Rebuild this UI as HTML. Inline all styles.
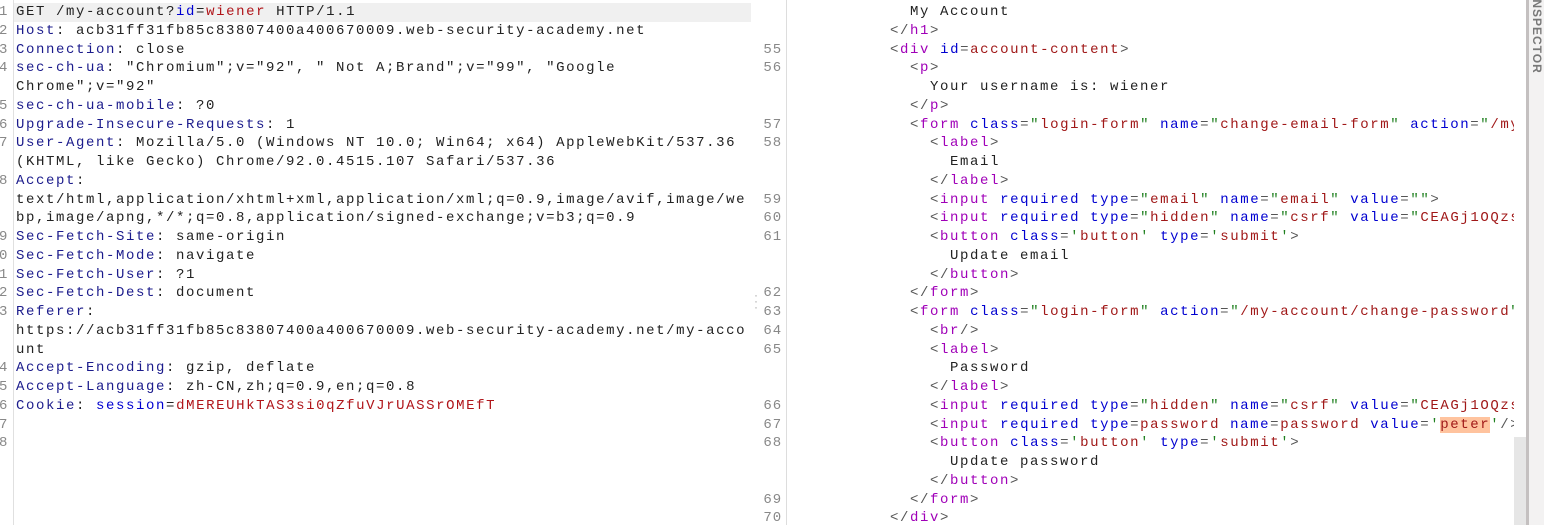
<!DOCTYPE html>
<html><head><meta charset="utf-8"><style>
html,body{margin:0;padding:0;background:#fff;width:1544px;height:525px;overflow:hidden;position:relative}
pre{margin:0;font-family:"Liberation Mono",monospace;font-size:14px;letter-spacing:1.6px;line-height:18.75px;position:absolute;white-space:pre;color:#222}
.h{color:#1c1c8c}.b{color:#0000d0}.r{color:#b0151a}.t{color:#a000b8}.g{color:#555}.q{color:#208020}.v{color:#a01818}
.num{color:#888}
</style></head><body>
<div style="position:absolute;left:13px;top:0;width:1px;height:525px;background:#e0e0e0"></div>
<div style="position:absolute;left:14px;top:3px;width:737px;height:19px;background:#f0f0f0"></div>
<pre class="num" style="left:-1px;top:3px;letter-spacing:0">1
2
3
4

5
6
7

8


9
0
1
2
3


4
5
6
7
8</pre>
<pre style="left:16px;top:3px;width:734px;overflow:hidden">GET /my-account?<span class="b">id</span>=<span class="r">wiener</span> HTTP/1.1
<span class="h">Host</span>: acb31ff31fb85c83807400a400670009.web-security-academy.net
<span class="h">Connection</span>: close
<span class="h">sec-ch-ua</span>: "Chromium";v="92", " Not A;Brand";v="99", "Google
Chrome";v="92"
<span class="h">sec-ch-ua-mobile</span>: ?0
<span class="h">Upgrade-Insecure-Requests</span>: 1
<span class="h">User-Agent</span>: Mozilla/5.0 (Windows NT 10.0; Win64; x64) AppleWebKit/537.36
(KHTML, like Gecko) Chrome/92.0.4515.107 Safari/537.36
<span class="h">Accept</span>:
text/html,application/xhtml+xml,application/xml;q=0.9,image/avif,image/we
bp,image/apng,*/*;q=0.8,application/signed-exchange;v=b3;q=0.9
<span class="h">Sec-Fetch-Site</span>: same-origin
<span class="h">Sec-Fetch-Mode</span>: navigate
<span class="h">Sec-Fetch-User</span>: ?1
<span class="h">Sec-Fetch-Dest</span>: document
<span class="h">Referer</span>:
https://acb31ff31fb85c83807400a400670009.web-security-academy.net/my-acco
unt
<span class="h">Accept-Encoding</span>: gzip, deflate
<span class="h">Accept-Language</span>: zh-CN,zh;q=0.9,en;q=0.8
<span class="h">Cookie</span>: <span class="b">session</span>=<span class="r">dMEREUHkTAS3si0qZfuVJrUASSrOMEfT</span></pre>
<div style="position:absolute;left:754px;top:292px;color:#aaa;font:12px 'Liberation Sans';line-height:6px">·<br>·<br>·</div>
<div style="position:absolute;left:786px;top:0;width:1px;height:525px;background:#ddd"></div>
<pre class="num" style="left:762px;top:3px;letter-spacing:0.9px;text-align:right;width:20px">&nbsp;
&nbsp;
55
56
&nbsp;
&nbsp;
57
58
&nbsp;
&nbsp;
59
60
61
&nbsp;
&nbsp;
62
63
64
65
&nbsp;
&nbsp;
66
67
68
&nbsp;
&nbsp;
69
70</pre>
<pre style="left:870px;top:3px;width:644px;overflow:hidden">    My Account
  <span class="g">&lt;/</span><span class="t">h1</span><span class="g">&gt;</span>
  <span class="g">&lt;</span><span class="t">div</span> <span class="b">id</span><span class="g">=</span><span class="v">account-content</span><span class="g">&gt;</span>
    <span class="g">&lt;</span><span class="t">p</span><span class="g">&gt;</span>
      Your username is: wiener
    <span class="g">&lt;/</span><span class="t">p</span><span class="g">&gt;</span>
    <span class="g">&lt;</span><span class="t">form</span> <span class="b">class</span><span class="g">=</span><span class="q">"</span><span class="v">login-form</span><span class="q">"</span> <span class="b">name</span><span class="g">=</span><span class="q">"</span><span class="v">change-email-form</span><span class="q">"</span> <span class="b">action</span><span class="g">=</span><span class="q">"</span><span class="v">/my-account/change-email</span>
      <span class="g">&lt;</span><span class="t">label</span><span class="g">&gt;</span>
        Email
      <span class="g">&lt;/</span><span class="t">label</span><span class="g">&gt;</span>
      <span class="g">&lt;</span><span class="t">input</span> <span class="b">required</span> <span class="b">type</span><span class="g">=</span><span class="q">"</span><span class="v">email</span><span class="q">"</span> <span class="b">name</span><span class="g">=</span><span class="q">"</span><span class="v">email</span><span class="q">"</span> <span class="b">value</span><span class="g">=</span><span class="q">""</span><span class="g">&gt;</span>
      <span class="g">&lt;</span><span class="t">input</span> <span class="b">required</span> <span class="b">type</span><span class="g">=</span><span class="q">"</span><span class="v">hidden</span><span class="q">"</span> <span class="b">name</span><span class="g">=</span><span class="q">"</span><span class="v">csrf</span><span class="q">"</span> <span class="b">value</span><span class="g">=</span><span class="q">"</span><span class="v">CEAGj1OQzsXXXXXX</span>
      <span class="g">&lt;</span><span class="t">button</span> <span class="b">class</span><span class="g">=</span><span class="q">'</span><span class="v">button</span><span class="q">'</span> <span class="b">type</span><span class="g">=</span><span class="q">'</span><span class="v">submit</span><span class="q">'</span><span class="g">&gt;</span>
        Update email
      <span class="g">&lt;/</span><span class="t">button</span><span class="g">&gt;</span>
    <span class="g">&lt;/</span><span class="t">form</span><span class="g">&gt;</span>
    <span class="g">&lt;</span><span class="t">form</span> <span class="b">class</span><span class="g">=</span><span class="q">"</span><span class="v">login-form</span><span class="q">"</span> <span class="b">action</span><span class="g">=</span><span class="q">"</span><span class="v">/my-account/change-password</span><span class="q">"</span>
      <span class="g">&lt;</span><span class="t">br</span><span class="g">/&gt;</span>
      <span class="g">&lt;</span><span class="t">label</span><span class="g">&gt;</span>
        Password
      <span class="g">&lt;/</span><span class="t">label</span><span class="g">&gt;</span>
      <span class="g">&lt;</span><span class="t">input</span> <span class="b">required</span> <span class="b">type</span><span class="g">=</span><span class="q">"</span><span class="v">hidden</span><span class="q">"</span> <span class="b">name</span><span class="g">=</span><span class="q">"</span><span class="v">csrf</span><span class="q">"</span> <span class="b">value</span><span class="g">=</span><span class="q">"</span><span class="v">CEAGj1OQzsXXXXXX</span>
      <span class="g">&lt;</span><span class="t">input</span> <span class="b">required</span> <span class="b">type</span><span class="g">=</span><span class="v">password</span> <span class="b">name</span><span class="g">=</span><span class="v">password</span> <span class="b">value</span><span class="g">=</span><span class="q">'</span><span class="v" style="background:#ffc39e">peter</span><span class="q">'</span><span class="g">/&gt;</span>
      <span class="g">&lt;</span><span class="t">button</span> <span class="b">class</span><span class="g">=</span><span class="q">'</span><span class="v">button</span><span class="q">'</span> <span class="b">type</span><span class="g">=</span><span class="q">'</span><span class="v">submit</span><span class="q">'</span><span class="g">&gt;</span>
        Update password
      <span class="g">&lt;/</span><span class="t">button</span><span class="g">&gt;</span>
    <span class="g">&lt;/</span><span class="t">form</span><span class="g">&gt;</span>
  <span class="g">&lt;/</span><span class="t">div</span><span class="g">&gt;</span></pre>
<div style="position:absolute;left:1514px;top:437px;width:12px;height:88px;background:#e6e6e6"></div>
<div style="position:absolute;left:1526px;top:0;width:3px;height:525px;background:#c4c0c0"></div>
<div style="position:absolute;left:1529px;top:0;width:15px;height:525px;background:#f3f2f2;overflow:hidden">
<div style="position:absolute;left:0;top:0;transform-origin:0 0;transform:translate(15px,-5px) rotate(90deg);font:bold 12px 'Liberation Sans',sans-serif;color:#777;letter-spacing:1px;white-space:nowrap">INSPECTOR</div>
</div>
</body></html>
